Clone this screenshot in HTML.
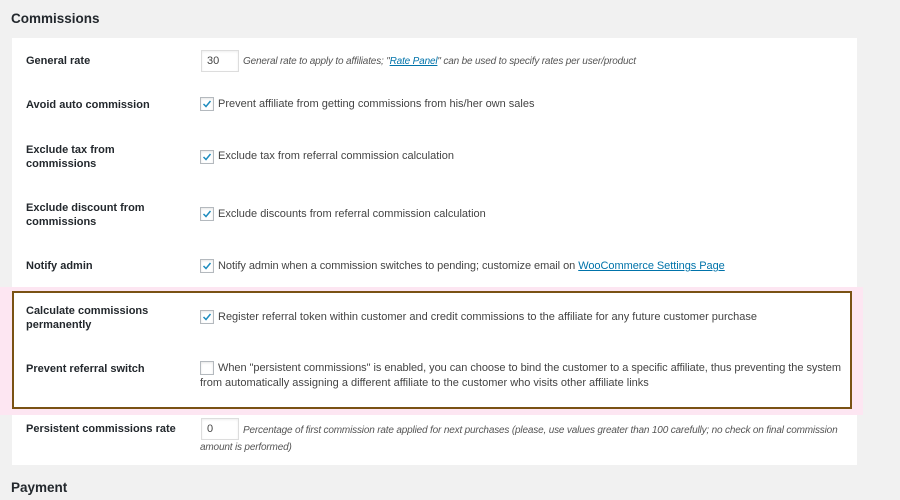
<!DOCTYPE html>
<html><head><meta charset="utf-8">
<style>
html,body{margin:0;padding:0}
body{width:900px;height:500px;background:#f1f1f1;position:relative;overflow:hidden;font-family:"Liberation Sans",sans-serif;color:#444;font-size:11px}
h2{position:absolute;margin:0;font-size:13.5px;font-weight:bold;color:#23282d}
.panel{position:absolute;left:12px;top:38px;width:845px;height:427px;background:#fff}
.pink{position:absolute;left:0;top:287px;width:863px;height:128px;background:#fde6f2}
.box{position:absolute;left:12px;top:291px;width:836px;height:114px;background:#fff;border:2px solid #7a5214}
.lbl{position:absolute;font-weight:bold;color:#23282d;font-size:11px;line-height:14px}
.txt{position:absolute;font-size:11px;line-height:17px;color:#444;white-space:nowrap}
.it{font-style:italic;font-size:10px;color:#555;letter-spacing:-0.17px}
.inp{position:absolute;border:1px solid #ddd;box-shadow:inset 0 1px 2px rgba(0,0,0,.07);background:#fff;font-size:11px;line-height:20px;padding-left:5px;box-sizing:border-box;width:38px;height:22px}
.cb{position:absolute;width:12px;height:12px;border:1px solid #b4b9be;background:#fff;box-shadow:inset 0 1px 2px rgba(0,0,0,.1)}
.cb svg{position:absolute;left:1px;top:1px}
a{color:#0073aa;text-decoration:underline}
</style></head><body>
<h2 style="left:11px;top:11px">Commissions</h2>
<div class="panel"></div>
<div class="pink"></div>
<div class="box"></div>

<div class="lbl" style="left:26px;top:54px">General rate</div>
<div class="inp" style="left:201px;top:50px">30</div>
<div class="txt it" style="left:243px;top:53px">General rate to apply to affiliates; "<a>Rate Panel</a>" can be used to specify rates per user/product</div>

<div class="lbl" style="left:26px;top:98px">Avoid auto commission</div>
<div class="cb" style="left:200px;top:97px"><svg width="10" height="10" viewBox="0 0 10 10"><path d="M1.5 5 L4 7.5 L8.5 2" stroke="#1e8cbe" stroke-width="1.5" fill="none"/></svg></div>
<div class="txt" style="left:218px;top:96px">Prevent affiliate from getting commissions from his/her own sales</div>

<div class="lbl" style="left:26px;top:143px">Exclude tax from<br>commissions</div>
<div class="cb" style="left:200px;top:150px"><svg width="10" height="10" viewBox="0 0 10 10"><path d="M1.5 5 L4 7.5 L8.5 2" stroke="#1e8cbe" stroke-width="1.5" fill="none"/></svg></div>
<div class="txt" style="left:218px;top:148px">Exclude tax from referral commission calculation</div>

<div class="lbl" style="left:26px;top:201px">Exclude discount from<br>commissions</div>
<div class="cb" style="left:200px;top:207px"><svg width="10" height="10" viewBox="0 0 10 10"><path d="M1.5 5 L4 7.5 L8.5 2" stroke="#1e8cbe" stroke-width="1.5" fill="none"/></svg></div>
<div class="txt" style="left:218px;top:206px">Exclude discounts from referral commission calculation</div>

<div class="lbl" style="left:26px;top:259px">Notify admin</div>
<div class="cb" style="left:200px;top:259px"><svg width="10" height="10" viewBox="0 0 10 10"><path d="M1.5 5 L4 7.5 L8.5 2" stroke="#1e8cbe" stroke-width="1.5" fill="none"/></svg></div>
<div class="txt" style="left:218px;top:258px;letter-spacing:-0.05px">Notify admin when a commission switches to pending; customize email on <a>WooCommerce Settings Page</a></div>

<div class="lbl" style="left:26px;top:304px">Calculate commissions<br>permanently</div>
<div class="cb" style="left:200px;top:310px"><svg width="10" height="10" viewBox="0 0 10 10"><path d="M1.5 5 L4 7.5 L8.5 2" stroke="#1e8cbe" stroke-width="1.5" fill="none"/></svg></div>
<div class="txt" style="left:218px;top:309px">Register referral token within customer and credit commissions to the affiliate for any future customer purchase</div>

<div class="lbl" style="left:26px;top:362px">Prevent referral switch</div>
<div class="cb" style="left:200px;top:361px"></div>
<div class="txt" style="left:218px;top:360px;letter-spacing:-0.05px">When "persistent commissions" is enabled, you can choose to bind the customer to a specific affiliate, thus preventing the system</div>
<div class="txt" style="left:200px;top:375px">from automatically assigning a different affiliate to the customer who visits other affiliate links</div>

<div class="lbl" style="left:26px;top:422px">Persistent commissions rate</div>
<div class="inp" style="left:201px;top:418px">0</div>
<div class="txt it" style="left:243px;top:422px">Percentage of first commission rate applied for next purchases (please, use values greater than 100 carefully; no check on final commission</div>
<div class="txt it" style="left:200px;top:439px">amount is performed)</div>

<h2 style="left:11px;top:480px">Payment</h2>
</body></html>
